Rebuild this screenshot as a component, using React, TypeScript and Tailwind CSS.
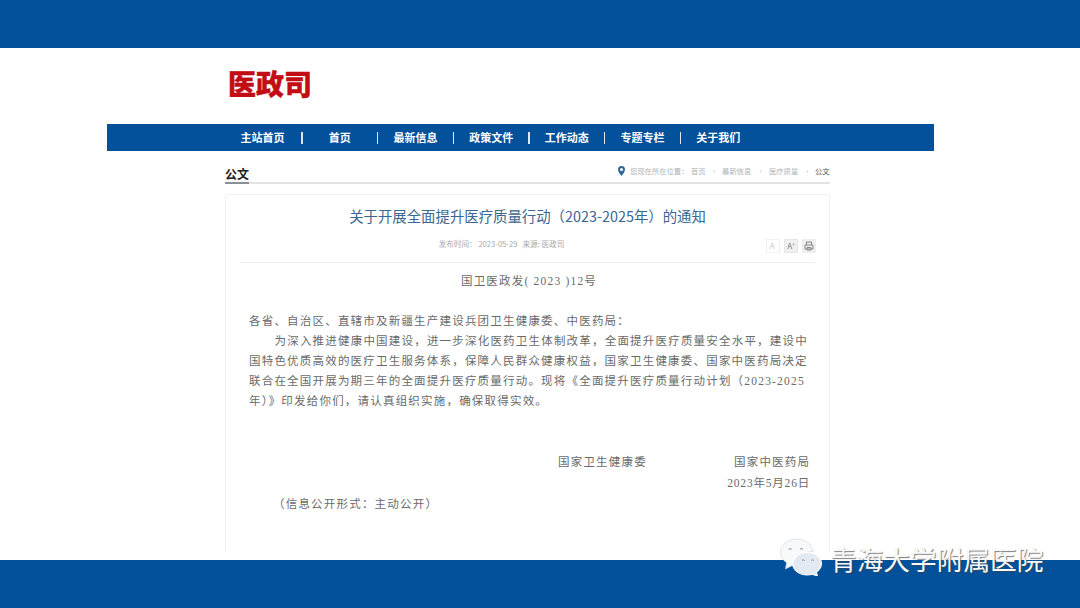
const sans = "font-['Noto_Sans_CJK_SC','Liberation_Sans',sans-serif]";
const serif = "font-['Liberation_Serif','Noto_Sans_CJK_SC',serif]";

const navItems = ["主站首页", "首页", "最新信息", "政策文件", "工作动态", "专题专栏", "关于我们"];

const bodyLines = [
  { text: "各省、自治区、直辖市及新疆生产建设兵团卫生健康委、中医药局：", indent: "" },
  { text: "为深入推进健康中国建设，进一步深化医药卫生体制改革，全面提升医疗质量安全水平，建设中", indent: "pl-[25.5px]" },
  { text: "国特色优质高效的医疗卫生服务体系，保障人民群众健康权益，国家卫生健康委、国家中医药局决定", indent: "" },
  { text: "联合在全国开展为期三年的全面提升医疗质量行动。现将《全面提升医疗质量行动计划（2023-2025", indent: "" },
  { text: "年）》印发给你们，请认真组织实施，确保取得实效。", indent: "" },
];

function WeChat() {
  return (
    <svg width="44" height="39" viewBox="0 0 42 38">
      <path d="M17 2C8 2 1 8 1 15c0 4 2 7 6 10l-1 6 6-3c2 .5 4 1 6 .8C16 22 22 14 33 14 31 7 25 2 17 2Z" fill="#f8f9fb" stroke="#d9dde3" strokeWidth="0.8" />
      <path d="M27 15c-8 0-14 5-14 11s6 11 14 11c2 0 3 0 5-.6l5 1.6-1-4c3-2 5-5 5-8 0-6-6-11-14-11Z" fill="#e3e9f2" stroke="#ffffff" strokeWidth="1" />
      <path d="M9 12a2 2 0 0 1 3 0M20 12a2 2 0 0 1 3 0M22 23a1.5 1.5 0 0 1 2.5 0M31 23a1.5 1.5 0 0 1 2.5 0" fill="none" stroke="#77808c" strokeWidth="0.9" />
    </svg>
  );
}

export default function App() {
  return (
    <div className={`relative flex h-[608px] w-[1080px] flex-col overflow-hidden bg-white ${sans}`}>
      <div className="h-12 shrink-0 bg-[#03509b]" />

      <main className="flex flex-1 flex-col">
        <div className="ml-[228px] flex h-[76px] items-start pt-[17px]">
          <h1 className="text-[28px] leading-[36px] font-black text-[#c30d14] [-webkit-text-stroke:0.4px_#c30d14]">医政司</h1>
        </div>

        <nav className="ml-[107px] flex h-[27px] w-[827px] items-center bg-[#03509b] pl-[118px] text-white">
          {navItems.map((label, i) => (
            <div key={label} className="flex items-center">
              <span className={`${i === 0 ? "w-[76.7px]" : "w-[75.2px]"} ${i === 0 ? "pr-[1.5px]" : ""} text-center text-[11px] leading-none font-bold whitespace-nowrap`}>{label}</span>
              {i < navItems.length - 1 && <span className="h-[12px] w-[1.5px] -mx-[0.5px] bg-[#dfe8f2]" />}
            </div>
          ))}
        </nav>

        <div className="ml-[225px] w-[605px]">
          <div className="relative flex h-[33px] items-end justify-between border-b-2 border-[#e3e3e3]">
            <span className="mb-[-2px] border-b-2 border-[#8a9096] pb-[0.5px] text-[12px] leading-[16px] font-bold text-[#222]">公文</span>
            <div className="mb-[6px] flex items-center text-[7.3px] leading-[10px] whitespace-nowrap text-[#b0b3b7]">
              <svg width="7" height="10" viewBox="0 0 7 10" className="mr-[5px]">
                <path d="M3.5 0A3.5 3.5 0 0 0 0 3.5C0 6 3.5 10 3.5 10S7 6 7 3.5A3.5 3.5 0 0 0 3.5 0Zm0 5A1.5 1.5 0 1 1 3.5 2a1.5 1.5 0 0 1 0 3Z" fill="#2f6598" />
              </svg>
              <span className="w-[61px]">您现在所在位置：</span>
              <span className="w-[15px]">首页</span>
              <span className="w-[16px] text-center">›</span>
              <span className="w-[30px]">最新信息</span>
              <span className="w-[17px] text-center">›</span>
              <span className="w-[30px]">医疗质量</span>
              <span className="w-[16px] text-center">›</span>
              <span className="w-[15px] text-[#555]">公文</span>
            </div>
          </div>

          <article className="mt-[10px] h-[358px] rounded-t-[3px] border-x border-t border-[#f1f1f1] px-[14px]">
            <h2 className="pt-[11px] text-center text-[14.4px] leading-[20px] text-[#3a668f]">关于开展全面提升医疗质量行动（2023-2025年）的通知</h2>

            <div className="relative h-[37px] border-b border-[#eeeeee]">
              <p className="w-[523px] pt-[13px] text-center text-[7.6px] leading-[10px] whitespace-nowrap text-[#a8a8a8]">发布时间：&nbsp;2023-05-29&nbsp;&nbsp;&nbsp;来源: 医政司</p>
              <div className="absolute top-[13px] right-[-1px] flex gap-[4px]">
                <span className="flex h-[14px] w-[14px] items-center justify-center border border-[#f0f0f0] text-[8px] text-[#c8c8c8]">A<sup className="text-[5px]">-</sup></span>
                <span className="flex h-[14px] w-[14px] items-center justify-center border border-[#e6e6e6] bg-[#f0f0f0] text-[8px] text-[#777]">A<sup className="text-[5px]">+</sup></span>
                <span className="flex h-[14px] w-[14px] items-center justify-center bg-[#eeeeee]">
                  <svg width="10" height="10" viewBox="0 0 10 10" fill="none" stroke="#888" strokeWidth="1">
                    <path d="M2.5 4V1h5v3M1 4h8v4H1ZM3 6.5h4V9H3Z" />
                  </svg>
                </span>
              </div>
            </div>

            <div className={`${serif} text-[11.5px] leading-[20px] tracking-[1.2px] text-[#6a6a6a]`}>
              <p className="w-[578px] pt-[8px] text-center">国卫医政发( 2023 )12号</p>
              <div className="mt-[20px] pl-[9px] whitespace-nowrap">
                {bodyLines.map((l) => (
                  <p key={l.text} className={l.indent}>{l.text}</p>
                ))}
              </div>
              <div className="mt-[41px] flex pl-[318px]">
                <span className="w-[176px]">国家卫生健康委</span>
                <span>国家中医药局</span>
              </div>
              <p className="mt-[0.5px] pr-[5px] text-right tracking-[0.8px]">2023年5月26日</p>
              <p className="mt-[1px] pl-[33px]">（信息公开形式：主动公开）</p>
            </div>
          </article>
        </div>
      </main>

      <div className="h-12 shrink-0 bg-[#03509b]" />

      <div className="absolute top-[537px] left-[779px] flex items-center gap-[7px]">
        <WeChat />
        <span className="mt-[4px] text-[26.7px] leading-[32px] whitespace-nowrap text-[#f7f9fb] [text-shadow:1px_1px_1px_rgba(70,70,70,0.7)]">青海大学附属医院</span>
      </div>
    </div>
  );
}
